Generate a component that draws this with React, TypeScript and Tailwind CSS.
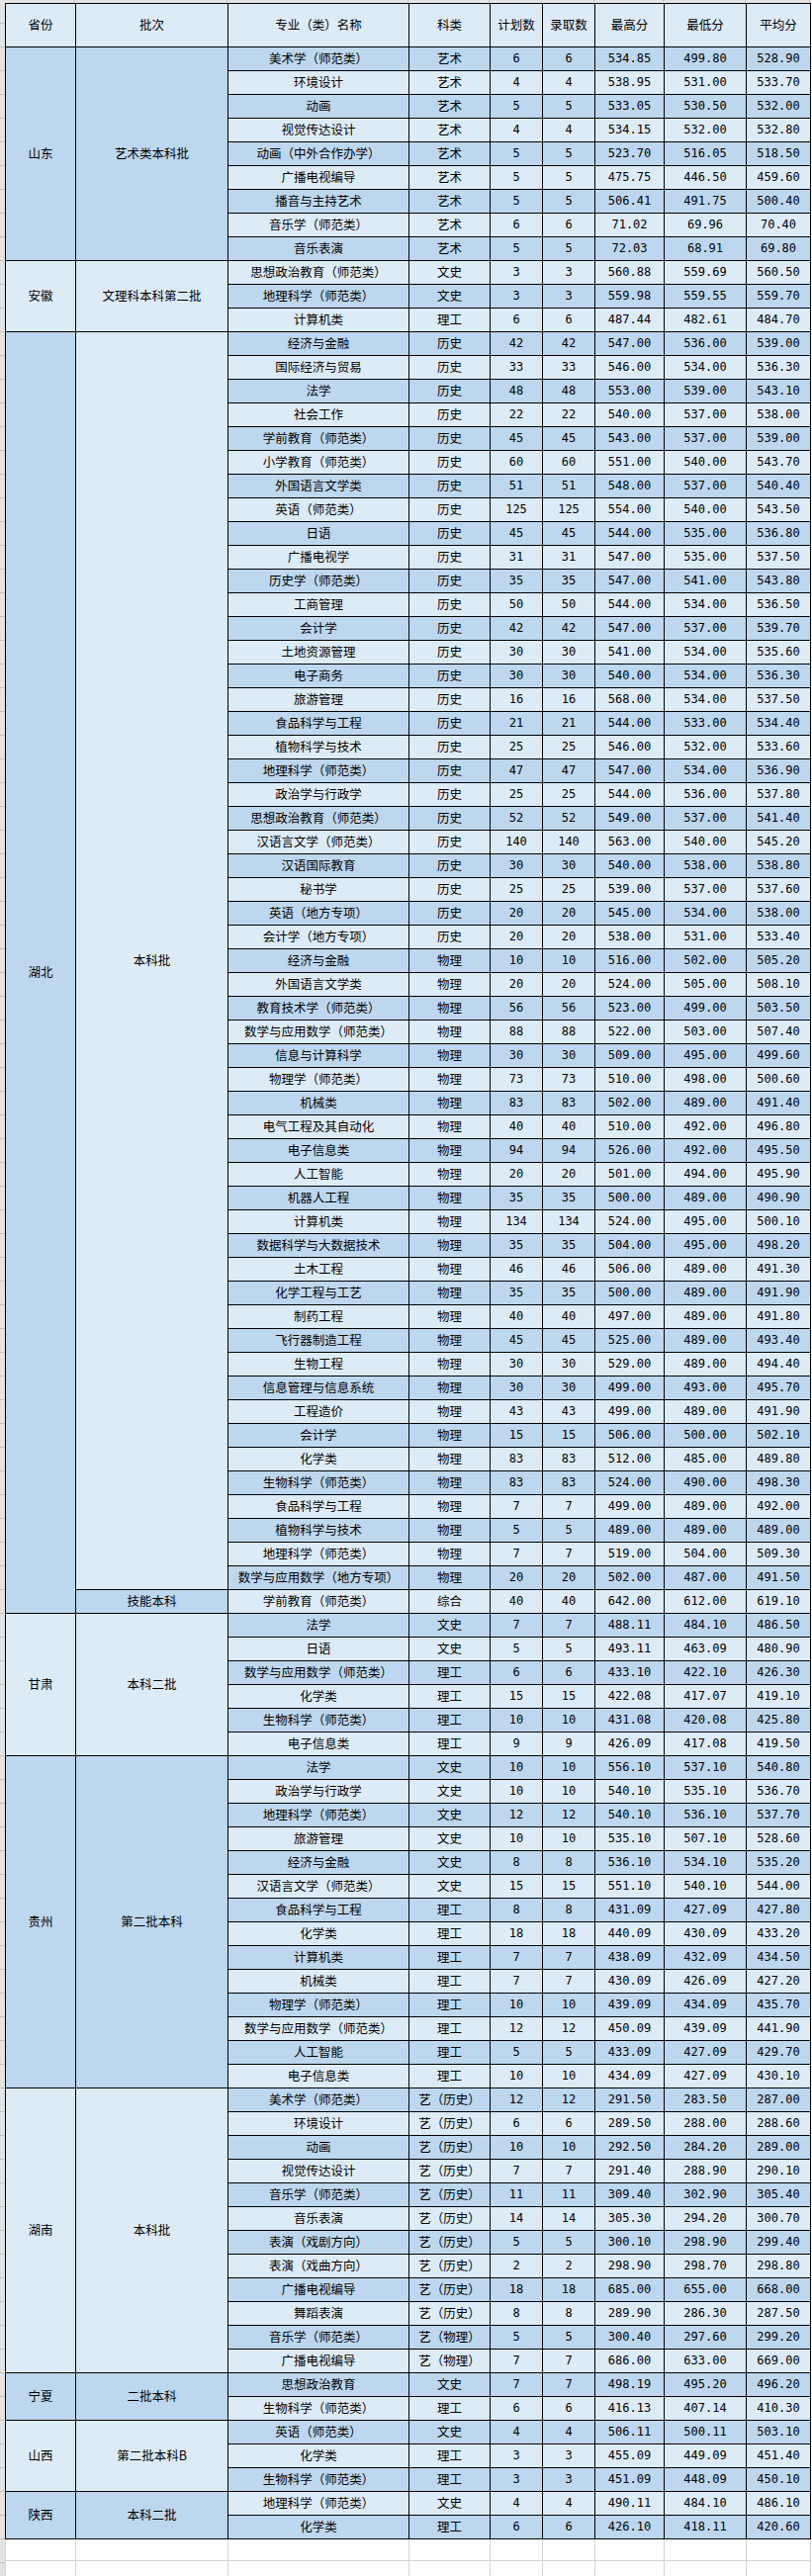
const DARK = "bg-[#bdd7ee]";
const LIGHT = "bg-[#ddebf7]";

type Batch = { name: string; dark: boolean; rows: string[] };
type Group = { prov: string; dark: boolean; batches: Batch[] };

// name|科类|计划|录取|最高|最低|平均
const groups: Group[] = [
  {
    prov: "山东",
    dark: true,
    batches: [
      {
        name: "艺术类本科批",
        dark: true,
        rows: [
          "美术学（师范类）|艺术|6|6|534.85|499.80|528.90",
          "环境设计|艺术|4|4|538.95|531.00|533.70",
          "动画|艺术|5|5|533.05|530.50|532.00",
          "视觉传达设计|艺术|4|4|534.15|532.00|532.80",
          "动画（中外合作办学）|艺术|5|5|523.70|516.05|518.50",
          "广播电视编导|艺术|5|5|475.75|446.50|459.60",
          "播音与主持艺术|艺术|5|5|506.41|491.75|500.40",
          "音乐学（师范类）|艺术|6|6|71.02|69.96|70.40",
          "音乐表演|艺术|5|5|72.03|68.91|69.80",
        ],
      },
    ],
  },
  {
    prov: "安徽",
    dark: false,
    batches: [
      {
        name: "文理科本科第二批",
        dark: false,
        rows: [
          "思想政治教育（师范类）|文史|3|3|560.88|559.69|560.50",
          "地理科学（师范类）|文史|3|3|559.98|559.55|559.70",
          "计算机类|理工|6|6|487.44|482.61|484.70",
        ],
      },
    ],
  },
  {
    prov: "湖北",
    dark: true,
    batches: [
      {
        name: "本科批",
        dark: false,
        rows: [
          "经济与金融|历史|42|42|547.00|536.00|539.00",
          "国际经济与贸易|历史|33|33|546.00|534.00|536.30",
          "法学|历史|48|48|553.00|539.00|543.10",
          "社会工作|历史|22|22|540.00|537.00|538.00",
          "学前教育（师范类）|历史|45|45|543.00|537.00|539.00",
          "小学教育（师范类）|历史|60|60|551.00|540.00|543.70",
          "外国语言文学类|历史|51|51|548.00|537.00|540.40",
          "英语（师范类）|历史|125|125|554.00|540.00|543.50",
          "日语|历史|45|45|544.00|535.00|536.80",
          "广播电视学|历史|31|31|547.00|535.00|537.50",
          "历史学（师范类）|历史|35|35|547.00|541.00|543.80",
          "工商管理|历史|50|50|544.00|534.00|536.50",
          "会计学|历史|42|42|547.00|537.00|539.70",
          "土地资源管理|历史|30|30|541.00|534.00|535.60",
          "电子商务|历史|30|30|540.00|534.00|536.30",
          "旅游管理|历史|16|16|568.00|534.00|537.50",
          "食品科学与工程|历史|21|21|544.00|533.00|534.40",
          "植物科学与技术|历史|25|25|546.00|532.00|533.60",
          "地理科学（师范类）|历史|47|47|547.00|534.00|536.90",
          "政治学与行政学|历史|25|25|544.00|536.00|537.80",
          "思想政治教育（师范类）|历史|52|52|549.00|537.00|541.40",
          "汉语言文学（师范类）|历史|140|140|563.00|540.00|545.20",
          "汉语国际教育|历史|30|30|540.00|538.00|538.80",
          "秘书学|历史|25|25|539.00|537.00|537.60",
          "英语（地方专项）|历史|20|20|545.00|534.00|538.00",
          "会计学（地方专项）|历史|20|20|538.00|531.00|533.40",
          "经济与金融|物理|10|10|516.00|502.00|505.20",
          "外国语言文学类|物理|20|20|524.00|505.00|508.10",
          "教育技术学（师范类）|物理|56|56|523.00|499.00|503.50",
          "数学与应用数学（师范类）|物理|88|88|522.00|503.00|507.40",
          "信息与计算科学|物理|30|30|509.00|495.00|499.60",
          "物理学（师范类）|物理|73|73|510.00|498.00|500.60",
          "机械类|物理|83|83|502.00|489.00|491.40",
          "电气工程及其自动化|物理|40|40|510.00|492.00|496.80",
          "电子信息类|物理|94|94|526.00|492.00|495.50",
          "人工智能|物理|20|20|501.00|494.00|495.90",
          "机器人工程|物理|35|35|500.00|489.00|490.90",
          "计算机类|物理|134|134|524.00|495.00|500.10",
          "数据科学与大数据技术|物理|35|35|504.00|495.00|498.20",
          "土木工程|物理|46|46|506.00|489.00|491.30",
          "化学工程与工艺|物理|35|35|500.00|489.00|491.90",
          "制药工程|物理|40|40|497.00|489.00|491.80",
          "飞行器制造工程|物理|45|45|525.00|489.00|493.40",
          "生物工程|物理|30|30|529.00|489.00|494.40",
          "信息管理与信息系统|物理|30|30|499.00|493.00|495.70",
          "工程造价|物理|43|43|499.00|489.00|491.90",
          "会计学|物理|15|15|506.00|500.00|502.10",
          "化学类|物理|83|83|512.00|485.00|489.80",
          "生物科学（师范类）|物理|83|83|524.00|490.00|498.30",
          "食品科学与工程|物理|7|7|499.00|489.00|492.00",
          "植物科学与技术|物理|5|5|489.00|489.00|489.00",
          "地理科学（师范类）|物理|7|7|519.00|504.00|509.30",
          "数学与应用数学（地方专项）|物理|20|20|502.00|487.00|491.50",
        ],
      },
      {
        name: "技能本科",
        dark: true,
        rows: ["学前教育（师范类）|综合|40|40|642.00|612.00|619.10"],
      },
    ],
  },
  {
    prov: "甘肃",
    dark: false,
    batches: [
      {
        name: "本科二批",
        dark: false,
        rows: [
          "法学|文史|7|7|488.11|484.10|486.50",
          "日语|文史|5|5|493.11|463.09|480.90",
          "数学与应用数学（师范类）|理工|6|6|433.10|422.10|426.30",
          "化学类|理工|15|15|422.08|417.07|419.10",
          "生物科学（师范类）|理工|10|10|431.08|420.08|425.80",
          "电子信息类|理工|9|9|426.09|417.08|419.50",
        ],
      },
    ],
  },
  {
    prov: "贵州",
    dark: true,
    batches: [
      {
        name: "第二批本科",
        dark: true,
        rows: [
          "法学|文史|10|10|556.10|537.10|540.80",
          "政治学与行政学|文史|10|10|540.10|535.10|536.70",
          "地理科学（师范类）|文史|12|12|540.10|536.10|537.70",
          "旅游管理|文史|10|10|535.10|507.10|528.60",
          "经济与金融|文史|8|8|536.10|534.10|535.20",
          "汉语言文学（师范类）|文史|15|15|551.10|540.10|544.00",
          "食品科学与工程|理工|8|8|431.09|427.09|427.80",
          "化学类|理工|18|18|440.09|430.09|433.20",
          "计算机类|理工|7|7|438.09|432.09|434.50",
          "机械类|理工|7|7|430.09|426.09|427.20",
          "物理学（师范类）|理工|10|10|439.09|434.09|435.70",
          "数学与应用数学（师范类）|理工|12|12|450.09|439.09|441.90",
          "人工智能|理工|5|5|433.09|427.09|429.70",
          "电子信息类|理工|10|10|434.09|427.09|430.10",
        ],
      },
    ],
  },
  {
    prov: "湖南",
    dark: false,
    batches: [
      {
        name: "本科批",
        dark: false,
        rows: [
          "美术学（师范类）|艺（历史）|12|12|291.50|283.50|287.00",
          "环境设计|艺（历史）|6|6|289.50|288.00|288.60",
          "动画|艺（历史）|10|10|292.50|284.20|289.00",
          "视觉传达设计|艺（历史）|7|7|291.40|288.90|290.10",
          "音乐学（师范类）|艺（历史）|11|11|309.40|302.90|305.40",
          "音乐表演|艺（历史）|14|14|305.30|294.20|300.70",
          "表演（戏剧方向）|艺（历史）|5|5|300.10|298.90|299.40",
          "表演（戏曲方向）|艺（历史）|2|2|298.90|298.70|298.80",
          "广播电视编导|艺（历史）|18|18|685.00|655.00|668.00",
          "舞蹈表演|艺（历史）|8|8|289.90|286.30|287.50",
          "音乐学（师范类）|艺（物理）|5|5|300.40|297.60|299.20",
          "广播电视编导|艺（物理）|7|7|686.00|633.00|669.00",
        ],
      },
    ],
  },
  {
    prov: "宁夏",
    dark: true,
    batches: [
      {
        name: "二批本科",
        dark: true,
        rows: [
          "思想政治教育|文史|7|7|498.19|495.20|496.20",
          "生物科学（师范类）|理工|6|6|416.13|407.14|410.30",
        ],
      },
    ],
  },
  {
    prov: "山西",
    dark: false,
    batches: [
      {
        name: "第二批本科B",
        dark: false,
        rows: [
          "英语（师范类）|文史|4|4|506.11|500.11|503.10",
          "化学类|理工|3|3|455.09|449.09|451.40",
          "生物科学（师范类）|理工|3|3|451.09|448.09|450.10",
        ],
      },
    ],
  },
  {
    prov: "陕西",
    dark: true,
    batches: [
      {
        name: "本科二批",
        dark: true,
        rows: [
          "地理科学（师范类）|文史|4|4|490.11|484.10|486.10",
          "化学类|理工|6|6|426.10|418.11|420.60",
        ],
      },
    ],
  },
];

const widths = [71, 154, 183, 82, 53, 53, 70, 83, 65];
const headers = ["省份", "批次", "专业（类）名称", "科类", "计划数", "录取数", "最高分", "最低分", "平均分"];

const cell = "border border-black p-0 text-center align-middle whitespace-nowrap";
const cjk = "font-['Noto_Sans_CJK_SC',sans-serif] text-[12.5px]";
const num = "font-['DejaVu_Sans_Mono',monospace] text-[12px]";

function Cols() {
  return (
    <colgroup>
      {widths.map((w, i) => (
        <col key={i} style={{ width: w }} />
      ))}
    </colgroup>
  );
}

export default function App() {
  let idx = 0;
  const body: React.ReactNode[] = [];

  groups.forEach((g) => {
    const total = g.batches.reduce((n, b) => n + b.rows.length, 0);
    g.batches.forEach((b, bi) => {
      b.rows.forEach((r, ri) => {
        const [name, cat, plan, adm, hi, lo, avg] = r.split("|");
        const bg = idx % 2 === 0 ? DARK : LIGHT;
        body.push(
          <tr key={idx} className="h-[24px]">
            {bi === 0 && ri === 0 && (
              <td rowSpan={total} className={`${cell} ${cjk} ${g.dark ? DARK : LIGHT}`}>
                {g.prov}
              </td>
            )}
            {ri === 0 && (
              <td rowSpan={b.rows.length} className={`${cell} ${cjk} ${b.dark ? DARK : LIGHT}`}>
                {b.name}
              </td>
            )}
            <td className={`${cell} ${cjk} ${bg}`}>{name}</td>
            <td className={`${cell} ${cjk} ${bg}`}>{cat}</td>
            <td className={`${cell} ${num} ${bg}`}>{plan}</td>
            <td className={`${cell} ${num} ${bg}`}>{adm}</td>
            <td className={`${cell} ${num} ${bg}`}>{hi}</td>
            <td className={`${cell} ${num} ${bg}`}>{lo}</td>
            <td className={`${cell} ${num} ${bg}`}>{avg}</td>
          </tr>
        );
        idx++;
      });
    });
  });

  return (
    <div className="flex w-[821px] h-[2605px] overflow-hidden bg-white text-black">
      {/* excel row header strip */}
      <div className="w-[5px] shrink-0 bg-[repeating-linear-gradient(to_bottom,#e4e4e4_0px,#e4e4e4_23px,#c2c2c2_23px,#c2c2c2_24px)]" />
      <div className="flex flex-col">
        <div className="flex h-[3px] bg-[#e4e4e4]">
          {widths.map((w, i) => (
            <div key={i} className="h-full border-r border-[#c2c2c2]" style={{ width: w }} />
          ))}
        </div>
        <table className="table-fixed border-collapse w-[814px]">
          <Cols />
          <thead>
            <tr className="h-[44px]">
              {headers.map((h) => (
                <th key={h} className={`${cell} ${cjk} ${LIGHT} font-normal`}>
                  {h}
                </th>
              ))}
            </tr>
          </thead>
          <tbody>{body}</tbody>
        </table>
        <div className="h-[40px] overflow-hidden">
          <table className="table-fixed border-collapse w-[814px]">
            <Cols />
            <tbody>
              {[0, 1].map((r) => (
                <tr key={r} className="h-[22px]">
                  {widths.map((_, i) => (
                    <td key={i} className="border border-t-0 border-[#d4d4d4] p-0" />
                  ))}
                </tr>
              ))}
            </tbody>
          </table>
        </div>
      </div>
    </div>
  );
}
